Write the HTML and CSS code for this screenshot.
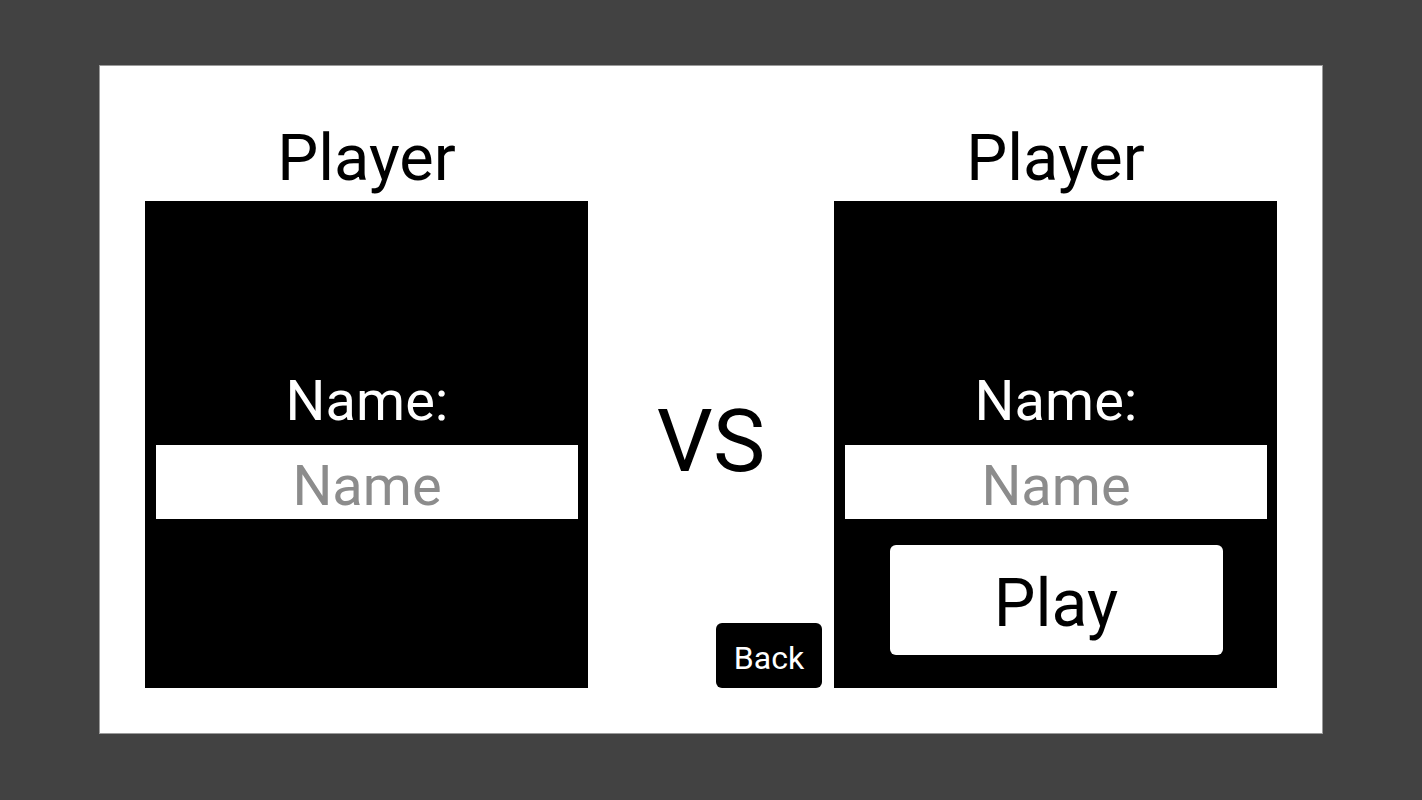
FILE: index.html
```html
<!DOCTYPE html>
<html>
<head>
<meta charset="utf-8">
<link rel="stylesheet" href="styles.css">
</head>
<body>
<div class="panel">
  <div class="player">
    <div class="title">Player</div>
    <div class="card">
      <div class="label">Name:</div>
      <input class="name-input" type="text" placeholder="Name">
    </div>
  </div>
  <div class="middle">
    <div class="vs">VS</div>
    <button class="back">Back</button>
  </div>
  <div class="player">
    <div class="title">Player</div>
    <div class="card">
      <div class="label">Name:</div>
      <input class="name-input" type="text" placeholder="Name">
      <button class="play">Play</button>
    </div>
  </div>
</div>
</body>
</html>
```
FILE: styles.css
```css
html, body {
  margin: 0;
  padding: 0;
}
body {
  background: #424242;
  height: 800px;
  font-family: Roboto, "Liberation Sans", sans-serif;
  padding-top: 66px;
  box-sizing: border-box;
}
.panel {
  width: 1222px;
  height: 667px;
  margin: 0 0 0 100px;
  background: #ffffff;
  box-shadow: 0 0 0 1px #9a9a9a;
  box-sizing: border-box;
  padding: 55px 45px 0 45px;
  display: grid;
  grid-template-columns: 443px 246px 443px;
}
.player {
  display: flex;
  flex-direction: column;
}
.title {
  font-size: 65px;
  line-height: 75px;
  height: 80px;
  text-align: center;
  color: #000;
}
.card {
  background: #000;
  height: 487px;
  box-sizing: border-box;
  padding: 167px 10px 0 11px;
  display: flex;
  flex-direction: column;
  align-items: center;
}
.label {
  color: #fff;
  font-size: 56px;
  line-height: 66px;
  margin-bottom: 11px;
}
.name-input {
  width: 100%;
  height: 74px;
  box-sizing: border-box;
  border: none;
  outline: none;
  margin: 0;
  padding: 7px 0 0 0;
  font-family: Roboto, "Liberation Sans", sans-serif;
  font-size: 56px;
  line-height: 65px;
  text-align: center;
  background: #fff;
  color: #000;
}
.name-input::placeholder {
  color: #8c8c8c;
}
.play {
  margin-top: 26px;
  width: 333px;
  height: 110px;
  border: none;
  border-radius: 6px;
  background: #fff;
  color: #000;
  font-family: Roboto, "Liberation Sans", sans-serif;
  font-size: 66px;
  padding: 6px 0 0 0;
  cursor: pointer;
}
.middle {
  display: flex;
  flex-direction: column;
  align-items: center;
  justify-content: flex-end;
  height: 567px;
}
.vs {
  font-size: 88px;
  line-height: 106px;
  margin-bottom: 129px;
}
.back {
  align-self: flex-end;
  margin-right: 12px;
  width: 106px;
  height: 65px;
  border: none;
  border-radius: 6px;
  background: #000;
  color: #fff;
  font-family: Roboto, "Liberation Sans", sans-serif;
  font-size: 32px;
  padding: 4px 0 0 0;
  cursor: pointer;
}
```
